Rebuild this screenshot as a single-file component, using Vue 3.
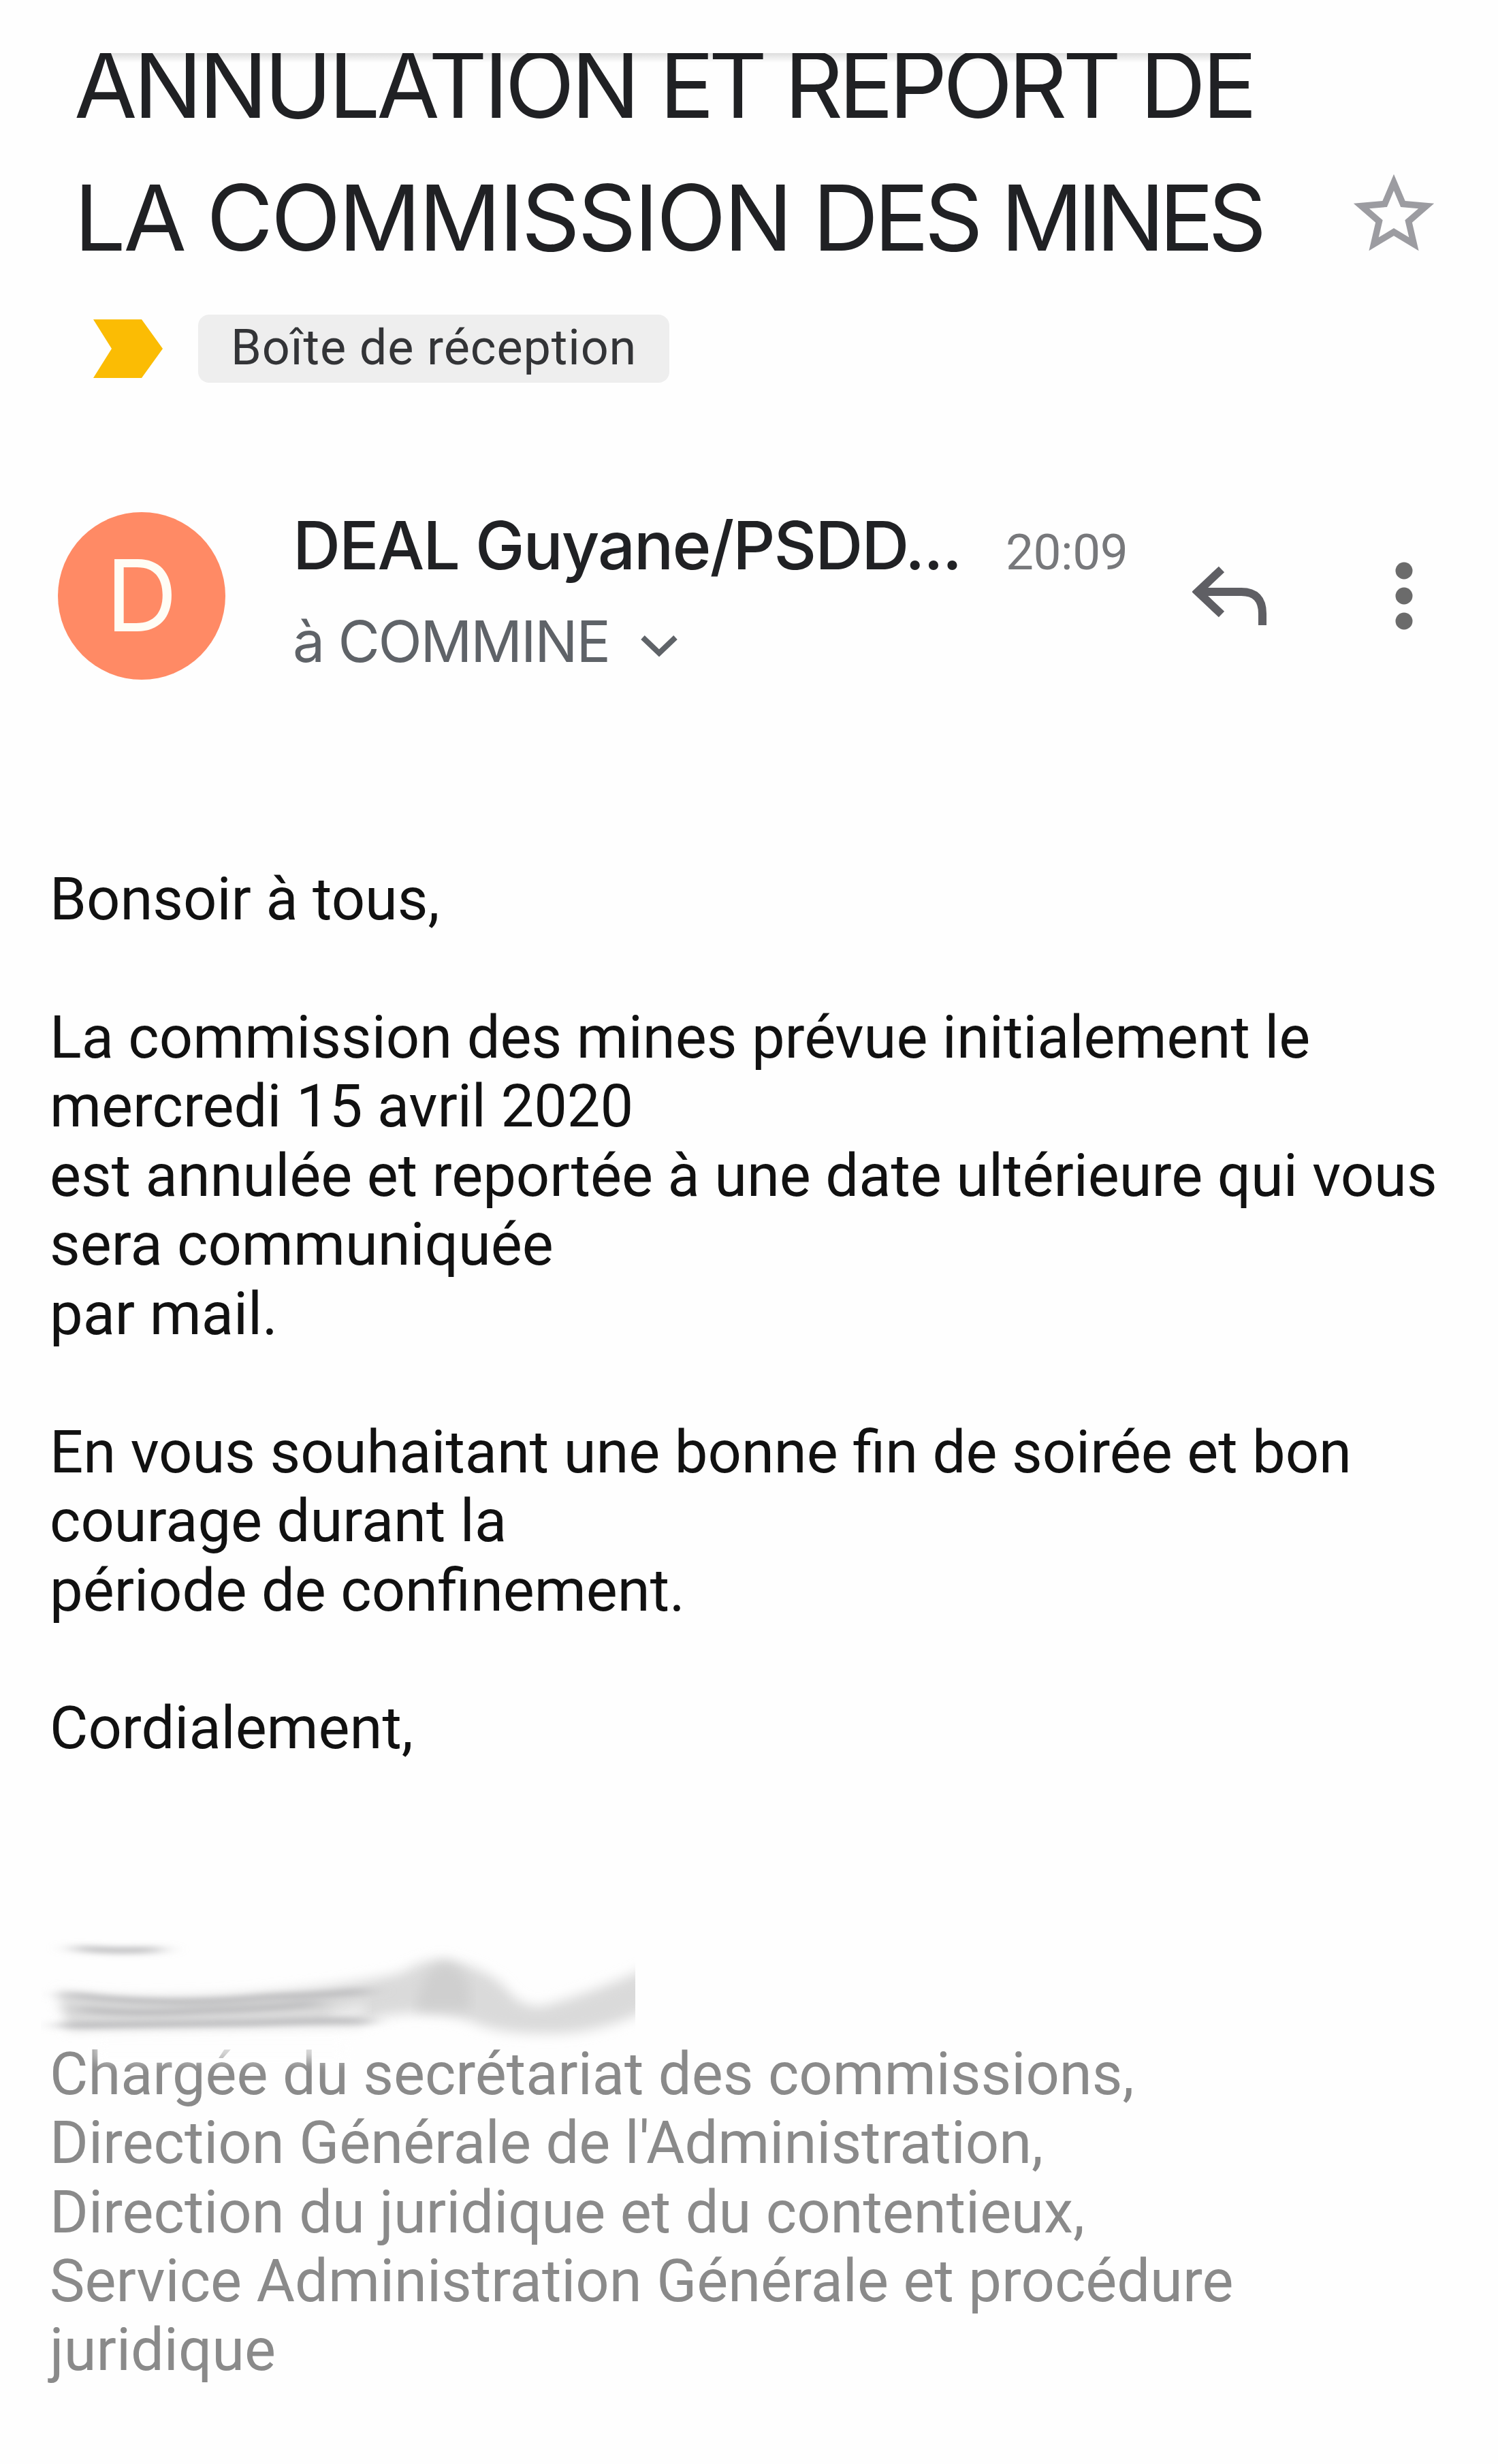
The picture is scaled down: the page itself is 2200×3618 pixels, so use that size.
<template>
  <div class="mail">
    <div class="toolbar"></div>

    <div class="subject-row">
      <h1 class="subject">
        <span class="subject-line first">ANNULATION <span class="tighter">ET</span> <span class="tight">REPORT</span> DE</span>
        <span class="subject-line second">LA COMMISSION <span class="tight">DES</span> <span class="tighter">MINES</span></span>
      </h1>
      <svg class="star" viewBox="0 0 24 24">
        <path d="M22 9.24l-7.19-.62L12 2 9.19 8.63 2 9.24l5.46 4.73L5.82 21 12 17.27 18.18 21l-1.63-7.03L22 9.24zM12 15.4l-3.76 2.27 1-4.28-3.32-2.88 4.38-.38L12 6.1l1.71 4.04 4.38.38-3.32 2.88 1 4.28L12 15.4z" />
      </svg>
    </div>

    <div class="labels">
      <svg class="important" viewBox="0 0 102 86">
        <path d="M0 0H71L102 43L71 86H0L27 43Z" />
      </svg>
      <span class="chip">{{ folder }}</span>
    </div>

    <div class="header">
      <div class="avatar">D</div>
      <div class="people">
        <div class="from">
          <span class="sender">DEAL Guyane/PSDD...</span>
          <span class="time">20:09</span>
        </div>
        <div class="to">
          <span class="recipient">à COMMINE</span>
          <svg class="expand" viewBox="0 0 56 34">
            <path d="M4 5L28 28L52 5" />
          </svg>
        </div>
      </div>
      <svg class="reply" viewBox="0 0 112 88">
        <path d="M43 5L8 38L43 71" />
        <path d="M10 38H72Q103 38 103 70V87" />
      </svg>
      <svg class="more" viewBox="0 0 26 100">
        <circle cx="13" cy="13" r="12.5" />
        <circle cx="13" cy="50" r="12.5" />
        <circle cx="13" cy="87" r="12.5" />
      </svg>
    </div>

    <div class="body">
      <p v-for="(paragraph, index) in paragraphs" :key="index">
        <span v-for="(line, i) in paragraph" :key="i" class="line">{{ line }}</span>
      </p>
    </div>

    <div class="signature">
      <span v-for="(line, index) in signature" :key="index" class="line">{{ line }}</span>

      <!-- name rubbed out by hand -->
      <svg class="smudge" viewBox="60 2800 900 260">
        <defs>
          <filter id="soft" x="-10%" y="-50%" width="120%" height="200%">
            <feGaussianBlur stdDeviation="9" />
          </filter>
          <filter id="fine" filterUnits="userSpaceOnUse" x="60" y="2800" width="900" height="260">
            <feGaussianBlur stdDeviation="18 4" />
          </filter>
          <clipPath id="edge">
            <rect x="60" y="2800" width="873" height="260" />
          </clipPath>
        </defs>
        <g clip-path="url(#edge)">
          <path class="veil" filter="url(#soft)" d="M138 2990H510V3024H138Z" />
          <path class="cloud" filter="url(#soft)" d="M84 2925Q240 2942 420 2922Q520 2912 590 2896Q620 2876 655 2876Q710 2888 740 2915Q765 2950 800 2944Q870 2925 960 2885V2945Q880 2988 800 2985Q730 2986 690 2966Q640 2952 590 2956Q550 2958 530 2972L100 2978Z" />
          <path class="cloud dark" filter="url(#soft)" d="M612 2950Q620 2886 655 2882Q695 2892 690 2950Z" />
          <path class="gap" filter="url(#soft)" d="M480 2955L540 2942L530 2960L490 2963Z" />
          <g class="streaks" filter="url(#fine)">
            <path d="M110 2859Q170 2866 235 2861" />
            <path d="M95 2927Q240 2948 400 2931Q470 2930 540 2922" />
            <path d="M115 2948Q180 2958 300 2951Q400 2948 470 2940" />
            <path d="M88 2973Q260 2971 380 2969Q470 2965 540 2967" />
          </g>
        </g>
      </svg>
    </div>
  </div>
</template>

<script setup>
const folder = 'Boîte de réception';

const paragraphs = [
  ['Bonsoir à tous,'],
  [
    'La commission des mines prévue initialement le',
    'mercredi 15 avril 2020',
    'est annulée et reportée à une date ultérieure qui vous',
    'sera communiquée',
    'par mail.'
  ],
  [
    'En vous souhaitant une bonne fin de soirée et bon',
    'courage durant la',
    'période de confinement.'
  ],
  ['Cordialement,']
];

const signature = [
  'Chargée du secrétariat des commissions,',
  "Direction Générale de l'Administration,",
  'Direction du juridique et du contentieux,',
  'Service Administration Générale et procédure',
  'juridique'
];
</script>

<style>
body {
  background: #fefefe;
}
</style>

<style scoped>
.mail {
  width: 2200px;
  height: 3618px;
  overflow: hidden;
  background: #fefefe;
  font-family: Roboto, "Liberation Sans", sans-serif;
}

.toolbar {
  position: relative;
  z-index: 1;
  height: 78px;
  background: #fefefe;
}

.toolbar::after {
  content: "";
  position: absolute;
  top: 78px;
  left: 150px;
  right: 380px;
  height: 14px;
  background: linear-gradient(rgba(0, 0, 0, 0.13), rgba(0, 0, 0, 0));
}

.subject-row {
  display: flex;
  justify-content: space-between;
  margin-top: -51px;
  padding: 0 82px 0 109px;
}

.subject {
  margin: 0;
  font-family: Inter, sans-serif;
  font-size: 134px;
  font-weight: 400;
  line-height: 195px;
  color: #202124;
}

.subject-line {
  display: block;
  white-space: nowrap;
}

.first {
  letter-spacing: -5.1px;
  word-spacing: 1px;
}

.second {
  letter-spacing: -3.2px;
  word-spacing: -2px;
}

.tight {
  letter-spacing: -6.5px;
}

.tighter {
  letter-spacing: -8.5px;
}

.star {
  width: 142px;
  height: 142px;
  margin-top: 217px;
  fill: #9c9ca1;
}

.labels {
  display: flex;
  align-items: center;
  gap: 52px;
  margin-top: 45px;
  padding-left: 137px;
}

.important {
  width: 102px;
  height: 86px;
  fill: #fbbc04;
}

.chip {
  width: 692px;
  height: 100px;
  box-sizing: border-box;
  padding-left: 48px;
  border-radius: 16px;
  background: #eeeeee;
  color: #333437;
  font-size: 72px;
  line-height: 97px;
  letter-spacing: 0.9px;
  white-space: nowrap;
}

.header {
  display: flex;
  align-items: flex-start;
  margin-top: 179px;
  padding-left: 85px;
  height: 256px;
}

.avatar {
  width: 246px;
  height: 246px;
  margin-top: 11px;
  border-radius: 50%;
  background: #ff8a65;
  color: #fffdf5;
  font-family: Inter, sans-serif;
  font-size: 146px;
  line-height: 244px;
  text-align: center;
}

.people {
  width: 1420px;
  padding-left: 99px;
  box-sizing: border-box;
}

.from {
  display: flex;
  align-items: baseline;
  height: 120px;
  white-space: nowrap;
}

.sender {
  width: 1047px;
  font-family: Inter, sans-serif;
  font-size: 97px;
  font-weight: 500;
  line-height: 120px;
  letter-spacing: -2px;
  color: #202124;
}

.time {
  font-size: 73px;
  letter-spacing: -0.5px;
  color: #77787b;
}

.to {
  display: flex;
  align-items: center;
  margin-top: 31px;
}

.recipient {
  width: 510px;
  font-family: Inter, sans-serif;
  font-size: 84px;
  line-height: 100px;
  letter-spacing: -2.2px;
  color: #5f6368;
}

.expand {
  width: 56px;
  height: 34px;
  margin-top: 12px;
  fill: none;
  stroke: #5f6368;
  stroke-width: 8;
}

.reply {
  width: 112px;
  height: 88px;
  margin-top: 90px;
  fill: none;
  stroke: #5f5f64;
  stroke-width: 12;
}

.more {
  width: 26px;
  height: 100px;
  margin: 84px 0 0 186px;
  fill: #6b6b6b;
}

.body,
.signature {
  padding-left: 73px;
  font-size: 86.7px;
  line-height: 101.45px;
}

.body {
  margin-top: 273px;
  color: #111111;
}

.body p {
  margin: 0 0 101.45px;
}

.line {
  display: block;
  white-space: nowrap;
}

.signature {
  position: relative;
  margin-top: 405.8px;
  color: #8a8a8a;
}

.smudge {
  position: absolute;
  top: -194px;
  left: 60px;
  width: 900px;
  height: 260px;
}

.veil,
.gap {
  fill: #fefefe;
  opacity: 0.7;
}

.cloud {
  fill: #dadada;
}

.dark {
  fill: #cfcfcf;
}

.streaks path {
  fill: none;
  stroke: #bcbcbe;
  stroke-width: 9;
}
</style>
